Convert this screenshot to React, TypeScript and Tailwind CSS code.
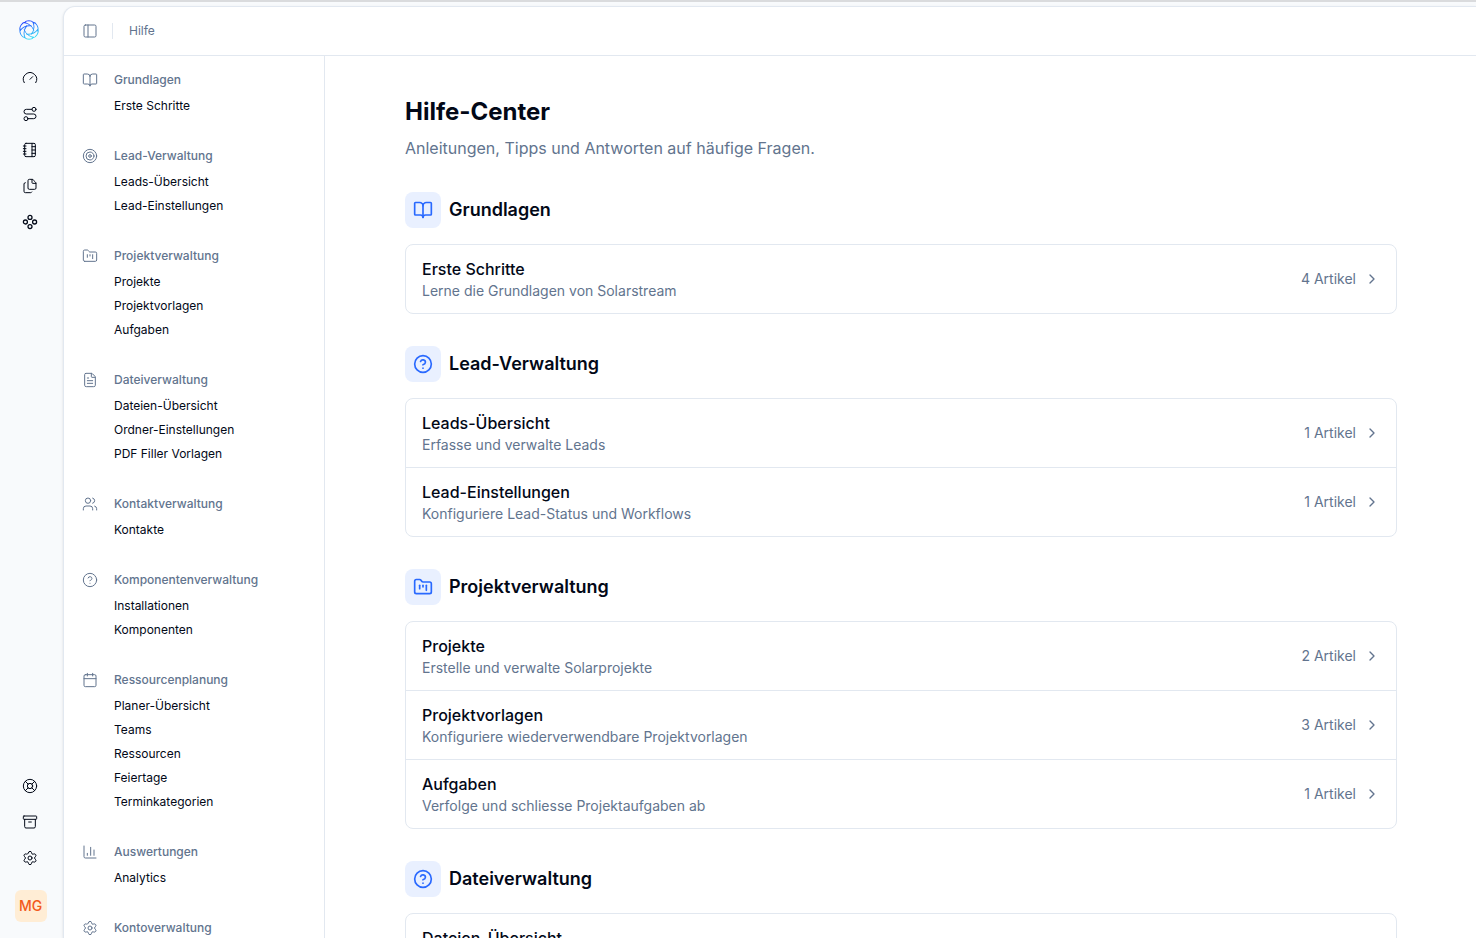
import React from "react";
import {
  Archive, BookOpen, Calendar, ChartColumn, ChevronRight, CircleHelp, FileText,
  Files, FolderKanban, Gauge, LifeBuoy, NotebookTabs, PanelLeft, Route, Settings, Target, Users,
  type LucideIcon,
} from "lucide-react";

type Group = { title: string; icon: LucideIcon; items: string[] };

const groups: Group[] = [
  { title: "Grundlagen", icon: BookOpen, items: ["Erste Schritte"] },
  { title: "Lead-Verwaltung", icon: Target, items: ["Leads-Übersicht", "Lead-Einstellungen"] },
  { title: "Projektverwaltung", icon: FolderKanban, items: ["Projekte", "Projektvorlagen", "Aufgaben"] },
  { title: "Dateiverwaltung", icon: FileText, items: ["Dateien-Übersicht", "Ordner-Einstellungen", "PDF Filler Vorlagen"] },
  { title: "Kontaktverwaltung", icon: Users, items: ["Kontakte"] },
  { title: "Komponentenverwaltung", icon: CircleHelp, items: ["Installationen", "Komponenten"] },
  { title: "Ressourcenplanung", icon: Calendar, items: ["Planer-Übersicht", "Teams", "Ressourcen", "Feiertage", "Terminkategorien"] },
  { title: "Auswertungen", icon: ChartColumn, items: ["Analytics"] },
  { title: "Kontoverwaltung", icon: Settings, items: [] },
];

type Entry = { title: string; text?: string; count?: number };
const sections: { title: string; icon: LucideIcon; entries: Entry[] }[] = [
  { title: "Grundlagen", icon: BookOpen, entries: [{ title: "Erste Schritte", text: "Lerne die Grundlagen von Solarstream", count: 4 }] },
  {
    title: "Lead-Verwaltung", icon: CircleHelp, entries: [
      { title: "Leads-Übersicht", text: "Erfasse und verwalte Leads", count: 1 },
      { title: "Lead-Einstellungen", text: "Konfiguriere Lead-Status und Workflows", count: 1 },
    ],
  },
  {
    title: "Projektverwaltung", icon: FolderKanban, entries: [
      { title: "Projekte", text: "Erstelle und verwalte Solarprojekte", count: 2 },
      { title: "Projektvorlagen", text: "Konfiguriere wiederverwendbare Projektvorlagen", count: 3 },
      { title: "Aufgaben", text: "Verfolge und schliesse Projektaufgaben ab", count: 1 },
    ],
  },
  { title: "Dateiverwaltung", icon: CircleHelp, entries: [{ title: "Dateien-Übersicht" }] },
];

type RailIcon = React.ComponentType<{ className?: string; strokeWidth?: string | number }>;

function FourCircles({ className }: { className?: string }) {
  return (
    <svg viewBox="0 0 24 24" className={className} fill="none" stroke="currentColor" strokeWidth="1.9">
      <circle cx="12" cy="5.1" r="3" />
      <circle cx="5.1" cy="12" r="3" />
      <circle cx="18.9" cy="12" r="3" />
      <circle cx="12" cy="18.9" r="3" />
    </svg>
  );
}

const railTop: [string, RailIcon][] = [
  ["Dashboard", Gauge], ["Leads", Route], ["Kontakte", NotebookTabs], ["Dateien", Files], ["Komponenten", FourCircles],
];
const railBottom: [string, RailIcon][] = [["Hilfe", LifeBuoy], ["Archiv", Archive], ["Einstellungen", Settings]];

function Logo() {
  return (
    <svg viewBox="0 0 40 40" className="size-5">
      <defs>
        <linearGradient id="logo-fill" gradientUnits="userSpaceOnUse" x1="12" y1="2" x2="26" y2="38">
          <stop offset="0" stopColor="#2038ff" />
          <stop offset="1" stopColor="#30e4f5" />
        </linearGradient>
        <mask id="logo-mask" maskUnits="userSpaceOnUse" x="0" y="0" width="40" height="40">
          <g fill="none" stroke="#fff" strokeWidth="1.8" strokeLinecap="round">
            {[0, 60, 120, 180, 240, 300].map((a) => (
              <path key={a} transform={`rotate(${a} 20 20)`} d="M10.5 5.3C13 .2 27 -.4 30 6.5M10.5 5.3Q24 7 29.5 20" />
            ))}
          </g>
        </mask>
      </defs>
      <rect width="40" height="40" fill="url(#logo-fill)" mask="url(#logo-mask)" />
    </svg>
  );
}

function RailLink({ label, icon: Icon }: { label: string; icon: RailIcon }) {
  return (
    <a href="#" aria-label={label} className="flex size-8 items-center justify-center rounded-md text-[#020817] hover:bg-slate-200">
      <Icon className="size-4" strokeWidth={1.5} />
    </a>
  );
}

export default function App() {
  return (
    <div className="flex h-screen overflow-hidden border-t-2 border-[#dadbdd] bg-slate-50 font-['Inter',sans-serif] text-[#020817]">
      <nav aria-label="Hauptnavigation" className="flex w-[63px] shrink-0 flex-col justify-between pt-3 pr-1 pb-4">
        <div className="flex flex-col items-center gap-1">
          <a href="#" aria-label="Startseite" className="mb-3 flex size-8 items-center justify-center pr-0.5"><Logo /></a>
          {railTop.map(([l, i]) => <RailLink key={l} label={l} icon={i} />)}
        </div>
        <div className="flex flex-col items-center gap-1">
          {railBottom.map(([l, i]) => <RailLink key={l} label={l} icon={i} />)}
          <button className="mt-3 ml-0.5 size-8 rounded-md bg-[#ffedd5] text-sm font-medium text-[#f2591c]">MG</button>
        </div>
      </nav>

      <div className="mt-1 flex min-w-0 flex-1 flex-col rounded-tl-xl border-t border-l border-slate-200 bg-white shadow-sm">
        <header className="flex h-[49px] shrink-0 items-center border-b border-slate-200 px-4 text-slate-500">
          <button aria-label="Seitenleiste umschalten" className="flex size-5 items-center justify-center">
            <PanelLeft className="size-4" strokeWidth={1.5} />
          </button>
          <span className="ml-3 h-4 w-px bg-slate-200" />
          <span className="ml-4 text-xs">Hilfe</span>
        </header>

        <div className="flex min-h-0 flex-1">
          <aside className="flex w-[261px] shrink-0 flex-col gap-6 overflow-hidden border-r border-slate-200 px-4 pt-2.5">
            {groups.map(({ title, icon: Icon, items }) => (
              <section key={title} className="shrink-0 text-xs">
                <h2 className="flex h-7 items-center gap-4 pl-0.5 font-medium text-slate-500">
                  <Icon className="size-4" strokeWidth={1.5} />
                  {title}
                </h2>
                <ul className="pl-[34px]">
                  {items.map((t) => (
                    <li key={t}><a href="#" className="block leading-6">{t}</a></li>
                  ))}
                </ul>
              </section>
            ))}
          </aside>

          <main className="min-w-0 flex-1 overflow-hidden pl-px">
            <div className="mx-auto flex max-w-5xl flex-col gap-8 px-4 pt-10">
              <div>
                <h1 className="text-2xl font-bold">Hilfe-Center</h1>
                <p className="mt-2 text-slate-500">Anleitungen, Tipps und Antworten auf häufige Fragen.</p>
              </div>
              {sections.map(({ title, icon: Icon, entries }) => (
                <section key={title}>
                  <h2 className="flex items-center gap-2 text-lg font-semibold">
                    <span className="flex size-9 items-center justify-center rounded-lg bg-[#e9f0ff] text-[#2969ff]">
                      <Icon className="size-5" />
                    </span>
                    {title}
                  </h2>
                  <div className="mt-4 divide-y divide-slate-200 rounded-lg border border-slate-200">
                    {entries.map((e) => (
                      <a key={e.title} href="#" className="flex items-center gap-2 px-4 py-3">
                        <span className="min-w-0 flex-1">
                          <span className="block font-medium">{e.title}</span>
                          <span className="block min-h-5 text-sm text-slate-500">{e.text}</span>
                        </span>
                        {e.count && <span className="text-sm text-slate-500">{e.count} Artikel</span>}
                        <ChevronRight className="size-4 text-slate-500" />
                      </a>
                    ))}
                  </div>
                </section>
              ))}
            </div>
          </main>
        </div>
      </div>
    </div>
  );
}
